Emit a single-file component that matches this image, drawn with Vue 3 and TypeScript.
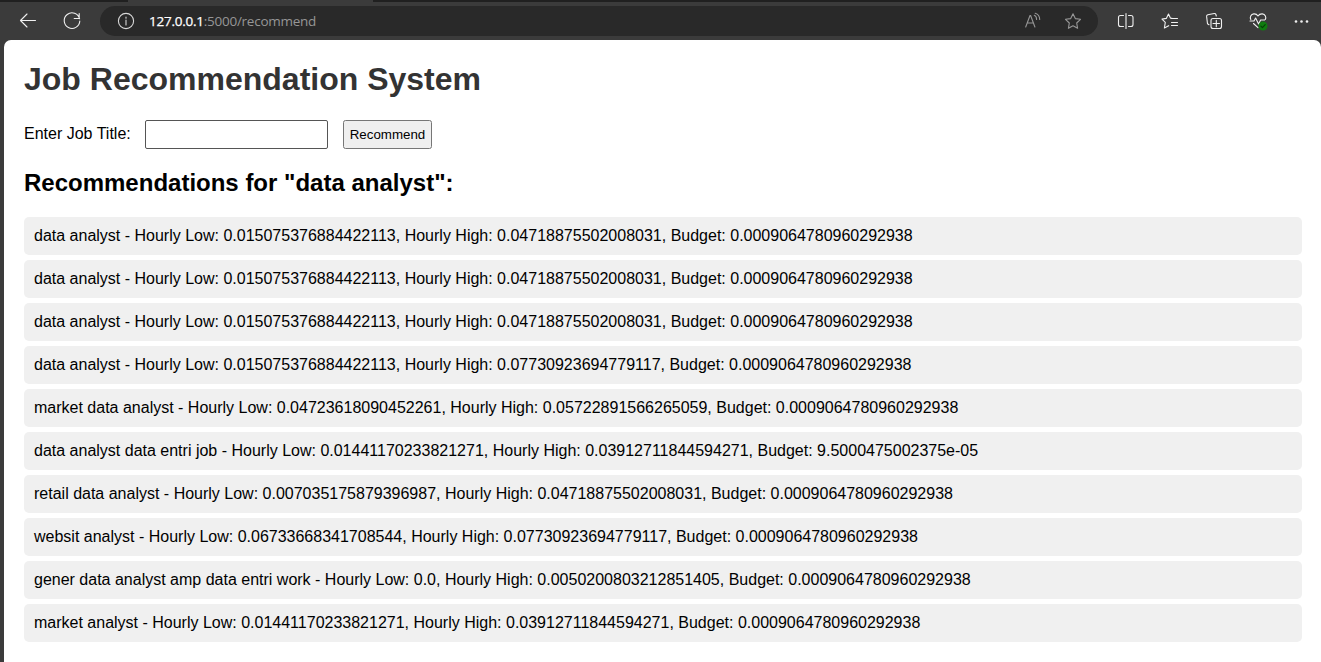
<script setup lang="ts">
import { ref } from 'vue'

interface Job {
  title: string
  low: string
  high: string
  budget: string
}

const jobTitle = ref('')
const query = 'data analyst'
const budget = '0.0009064780960292938'

const jobs: Job[] = [
  { title: 'data analyst', low: '0.015075376884422113', high: '0.04718875502008031', budget },
  { title: 'data analyst', low: '0.015075376884422113', high: '0.04718875502008031', budget },
  { title: 'data analyst', low: '0.015075376884422113', high: '0.04718875502008031', budget },
  { title: 'data analyst', low: '0.015075376884422113', high: '0.07730923694779117', budget },
  { title: 'market data analyst', low: '0.04723618090452261', high: '0.05722891566265059', budget },
  { title: 'data analyst data entri job', low: '0.01441170233821271', high: '0.03912711844594271', budget: '9.5000475002375e-05' },
  { title: 'retail data analyst', low: '0.007035175879396987', high: '0.04718875502008031', budget },
  { title: 'websit analyst', low: '0.06733668341708544', high: '0.07730923694779117', budget },
  { title: 'gener data analyst amp data entri work', low: '0.0', high: '0.0050200803212851405', budget },
  { title: 'market analyst', low: '0.01441170233821271', high: '0.03912711844594271', budget },
]
</script>

<template>
  <div class="window">
    <div class="tabs"><span class="tab"></span></div>
    <header class="toolbar">
      <svg class="icon back" viewBox="0 0 20 20"><path d="M17.5 9.5H2.5M9 3L2.5 9.5 9 16" /></svg>
      <svg class="icon reload" viewBox="0 0 20 20"><path d="M17.6 7.8A7.8 7.8 0 1 0 17.8 10M17.2 2.5v5h-5" /></svg>
      <div class="address">
        <svg class="icon info" viewBox="0 0 20 20"><circle cx="10" cy="10" r="7.6" /><path d="M10 9v5M10 6.1v1.2" /></svg>
        <span class="url"><b>127.0.0.1</b>:5000/recommend</span>
        <svg class="icon read" viewBox="0 0 20 20"><path d="M2.7 16L7 4.5h.6L11.9 16M4.2 12h6.2M11.3 4.3c1.6.7 2.3 2.2 2.3 4.1M12.2 2.2c2.9.9 4.5 3.2 4.5 6.3" /></svg>
        <svg class="icon star" viewBox="0 0 20 20"><path d="M10 2.8l2.3 4.8 5.2.7-3.8 3.7.9 5.3-4.6-2.5-4.6 2.5.9-5.3-3.8-3.7 5.2-.7z" /></svg>
      </div>
      <svg class="icon split" viewBox="0 0 20 20"><path d="M7.5 4.5H4.5a2 2 0 0 0-2 2v7a2 2 0 0 0 2 2h3M12.5 4.5h2.5a2 2 0 0 1 2 2v7a2 2 0 0 1-2 2h-2.5M10 2.5v15" /></svg>
      <svg class="icon favorites" viewBox="0 0 20 20"><path d="M12 7.3l-1.6-.2-1.9-4L6.3 7.4l-4.3.7 3.3 3.3-.9 5.6 4.3-2.3M11.5 7.5h6M11.5 11.5h6M11.5 14.5h6" /></svg>
      <svg class="icon collections" viewBox="0 0 20 20"><path d="M5 13.7l-1.5-.9-.9-7.4Q2.5 4 3.8 3.7l6.4-1.2q1.3-.2 1.7 1l.4 1.5" /><rect x="7" y="7.5" width="10.5" height="10" rx="2" /><path d="M12.3 9.3v6.5M9 12.5h6.5" /></svg>
      <svg class="icon health" viewBox="0 0 20 20"><path d="M2.8 8.5C1.6 6.3 2.8 3.2 5.8 2.9 8 2.7 9.3 3.9 10 5c.8-1.2 2.3-2.2 4.3-2.1 3 .3 4.2 3.3 3 5.6M5.5 12.5L10 16.7M2 10h4l1.6-3 3 6 2-4h4" /><circle class="badge" cx="15" cy="15" r="4.5" /><path class="check" d="M12.9 15.1l1.5 1.5 2.8-3" /></svg>
      <svg class="icon more" viewBox="0 0 20 20"><circle cx="4" cy="10.5" r="1.3" /><circle cx="9.5" cy="10.5" r="1.3" /><circle cx="15" cy="10.5" r="1.3" /></svg>
    </header>
    <main class="page">
      <h1>Job Recommendation System</h1>
      <form @submit.prevent>
        <label for="job">Enter Job Title:</label>
        <input id="job" v-model="jobTitle" type="text" />
        <button type="submit">Recommend</button>
      </form>
      <h2>Recommendations for "{{ query }}":</h2>
      <ul>
        <li v-for="(job, i) in jobs" :key="i">{{ job.title }} - Hourly Low: {{ job.low }}, Hourly High: {{ job.high }}, Budget: {{ job.budget }}</li>
      </ul>
    </main>
  </div>
</template>

<style>
body {
  margin: 0;
  overflow: hidden;
}
</style>

<style scoped>
.window {
  display: flex;
  flex-direction: column;
  height: 662px;
  background: #3b3b3b;
  font-family: "Liberation Sans", Arial, sans-serif;
  overflow: hidden;
}
.tabs {
  height: 2px;
  flex: none;
  background: #202020;
}
.tab {
  display: block;
  width: 245px;
  height: 2px;
  margin-left: 128px;
  background: #3b3b3b;
}
.toolbar {
  display: flex;
  align-items: center;
  height: 38px;
  flex: none;
  box-sizing: border-box;
  padding-left: 18px;
}
.icon {
  width: 20px;
  height: 20px;
  flex: none;
  fill: none;
  stroke: #f0f0f0;
  stroke-width: 1.1;
  stroke-linecap: round;
  stroke-linejoin: round;
}
.reload {
  margin-left: 24px;
}
.address {
  display: flex;
  align-items: center;
  width: 998px;
  height: 30px;
  box-sizing: border-box;
  margin-left: 18px;
  padding: 0 15px 0 16px;
  border-radius: 15px;
  background: #292929;
}
.info {
  stroke: #d8d8d8;
}
.url {
  flex: 1;
  margin-left: 13px;
  font: 13.5px/20px "Open Sans", "Noto Sans", sans-serif;
  letter-spacing: -0.25px;
  color: #969696;
}
.url b {
  font-weight: 400;
  color: #fff;
  -webkit-text-stroke: 0.25px #fff;
}
.read,
.star {
  stroke: #969696;
}
.star {
  margin-left: 20px;
}
.split {
  margin-left: 18px;
}
.favorites,
.collections,
.health,
.more {
  margin-left: 24px;
}
.badge {
  fill: #107c10;
  stroke: none;
}
.check {
  stroke: #063f06;
}
.more {
  fill: #f0f0f0;
  stroke: none;
}
.page {
  flex: 1;
  margin-left: 4px;
  padding: 21px 19px 0 20px;
  border-radius: 7px 7px 0 0;
  background: #fff;
  color: #000;
}
h1 {
  margin: 0;
  font-size: 32px;
  line-height: 37px;
  color: #333;
}
form {
  display: flex;
  align-items: center;
  height: 29px;
  margin-top: 22px;
}
label {
  width: 121px;
  font-size: 16px;
  line-height: 18px;
  padding-bottom: 2px;
}
input {
  width: 183px;
  height: 29px;
  box-sizing: border-box;
  margin: 0;
  padding: 5px;
  border: 1px solid #555;
  border-radius: 2px;
  background: #fff;
  outline: none;
}
button {
  width: 89px;
  height: 29px;
  margin: 0 0 0 15px;
  padding: 0;
  border: 1px solid #767676;
  border-radius: 2.5px;
  background: #efefef;
  color: #000;
  font: 13.333px "Liberation Sans", Arial, sans-serif;
}
h2 {
  margin: 20px 0;
  font-size: 24px;
  line-height: 28px;
}
ul {
  display: flex;
  flex-direction: column;
  gap: 5px;
  margin: 0;
  padding: 0;
  list-style: none;
}
li {
  height: 38px;
  box-sizing: border-box;
  padding: 10px;
  border-radius: 5px;
  background: #f0f0f0;
  font-size: 16px;
  line-height: 18px;
  white-space: nowrap;
}
</style>
